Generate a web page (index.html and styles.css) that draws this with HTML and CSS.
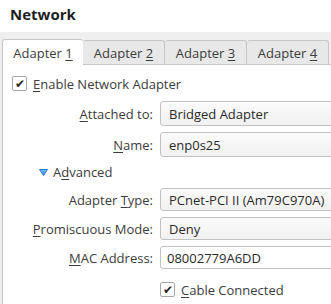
FILE: index.html
```html
<!DOCTYPE html>
<html lang="en">
<head>
    <meta charset="UTF-8">
    <title>Network</title>
    <link rel="stylesheet" href="styles.css">
</head>
<body>
    <div class="title-bar">Network</div>

    <div class="tab-area">
        <div class="tabs">
            <div class="tab active"><span>Adapter <u>1</u></span></div>
            <div class="tab"><span>Adapter <u>2</u></span></div>
            <div class="tab"><span>Adapter <u>3</u></span></div>
            <div class="tab"><span>Adapter <u>4</u></span></div>
        </div>

        <div class="panel">
            <label class="check-row">
                <span class="checkbox">&#10004;</span>
                <span><u>E</u>nable Network Adapter</span>
            </label>

            <div class="form-grid">
                <div class="label"><u>A</u>ttached to:</div>
                <div class="combo">Bridged Adapter</div>

                <div class="label"><u>N</u>ame:</div>
                <div class="combo">enp0s25</div>
            </div>

            <div class="expander">
                <svg class="arrow" width="9" height="7" viewBox="0 0 9 7">
                    <defs>
                        <linearGradient id="arrowFill" x1="0" y1="0" x2="0" y2="1">
                            <stop offset="0" stop-color="#7cc0f5"/>
                            <stop offset="1" stop-color="#2f86dc"/>
                        </linearGradient>
                    </defs>
                    <path d="M0.5 0.5 H8.5 L4.5 6.5 Z" fill="url(#arrowFill)" stroke="#2a78c8" stroke-width="1" stroke-linejoin="round"/>
                </svg>
                <span>A<u>d</u>vanced</span>
            </div>

            <div class="form-grid advanced">
                <div class="label">Adapter <u>T</u>ype:</div>
                <div class="combo">PCnet-PCI II (Am79C970A)</div>

                <div class="label"><u>P</u>romiscuous Mode:</div>
                <div class="combo">Deny</div>

                <div class="label"><u>M</u>AC Address:</div>
                <div class="field">08002779A6DD</div>

                <div></div>
                <label class="check-row cable">
                    <span class="checkbox">&#10004;</span>
                    <span><u>C</u>able Connected</span>
                </label>
            </div>
        </div>
    </div>
</body>
</html>
```

FILE: styles.css
```css
* {
    margin: 0;
    padding: 0;
    box-sizing: border-box;
}

body {
    font-family: 'Open Sans', 'Noto Sans', sans-serif;
    font-size: 13px;
    color: #3c3c3c;
    background: #efefef;
    width: 331px;
    height: 304px;
    overflow: hidden;
}

u {
    text-decoration: underline;
    text-underline-offset: 2px;
}

.title-bar {
    background: #ffffff;
    height: 32px;
    padding: 4px 10px 0;
    font-size: 15px;
    font-weight: bold;
    color: #1e1e1e;
}

.tab-area {
    padding: 6px 0 0 2px;
}

.tabs {
    display: flex;
    align-items: flex-end;
    height: 26px;
}

.tab {
    width: 82px;
    height: 24px;
    background: #e8e8e8;
    border: 1px solid #c6c6c6;
    border-bottom: none;
    border-left: none;
    border-radius: 3px 3px 0 0;
    display: flex;
    align-items: center;
    justify-content: center;
}

.tab.active {
    height: 26px;
    width: 81px;
    background: #ffffff;
    border-left: 1px solid #c6c6c6;
    border-right: none;
    position: relative;
    z-index: 1;
    margin-bottom: -1px;
}

.panel {
    background: #ffffff;
    border-top: 1px solid #c6c6c6;
    border-left: 1px solid #c6c6c6;
    width: 329px;
    height: 240px;
    overflow: hidden;
    padding: 11px 0 0 9px;
}

.check-row {
    display: flex;
    align-items: center;
    gap: 6px;
    height: 15px;
}

.checkbox {
    width: 15px;
    height: 15px;
    border: 1px solid #a8a8a8;
    border-radius: 2px;
    background: #ffffff;
    font-size: 12px;
    line-height: 13px;
    text-align: center;
    color: #2a2a2a;
}

.form-grid {
    display: grid;
    grid-template-columns: 141px 190px;
    column-gap: 7px;
    row-gap: 6px;
    margin-top: 10px;
}

.form-grid.advanced {
    row-gap: 6px;
    margin-top: 6px;
}

.label {
    text-align: right;
    align-self: center;
}

.combo, .field {
    height: 25px;
    border: 1px solid #c2c2c2;
    border-radius: 3px;
    background: linear-gradient(#fbfbfb, #f1f1f1);
    padding: 0 8px;
    display: flex;
    align-items: center;
    color: #2a2a2a;
}

.advanced .combo, .advanced .field {
    height: 23px;
}

.field {
    background: #ffffff;
    padding-left: 6px;
}

.expander {
    display: flex;
    align-items: center;
    gap: 5px;
    height: 20px;
    margin-top: 5px;
    padding-left: 27px;
}

.check-row.cable {
    margin-top: 7px;
}
```
